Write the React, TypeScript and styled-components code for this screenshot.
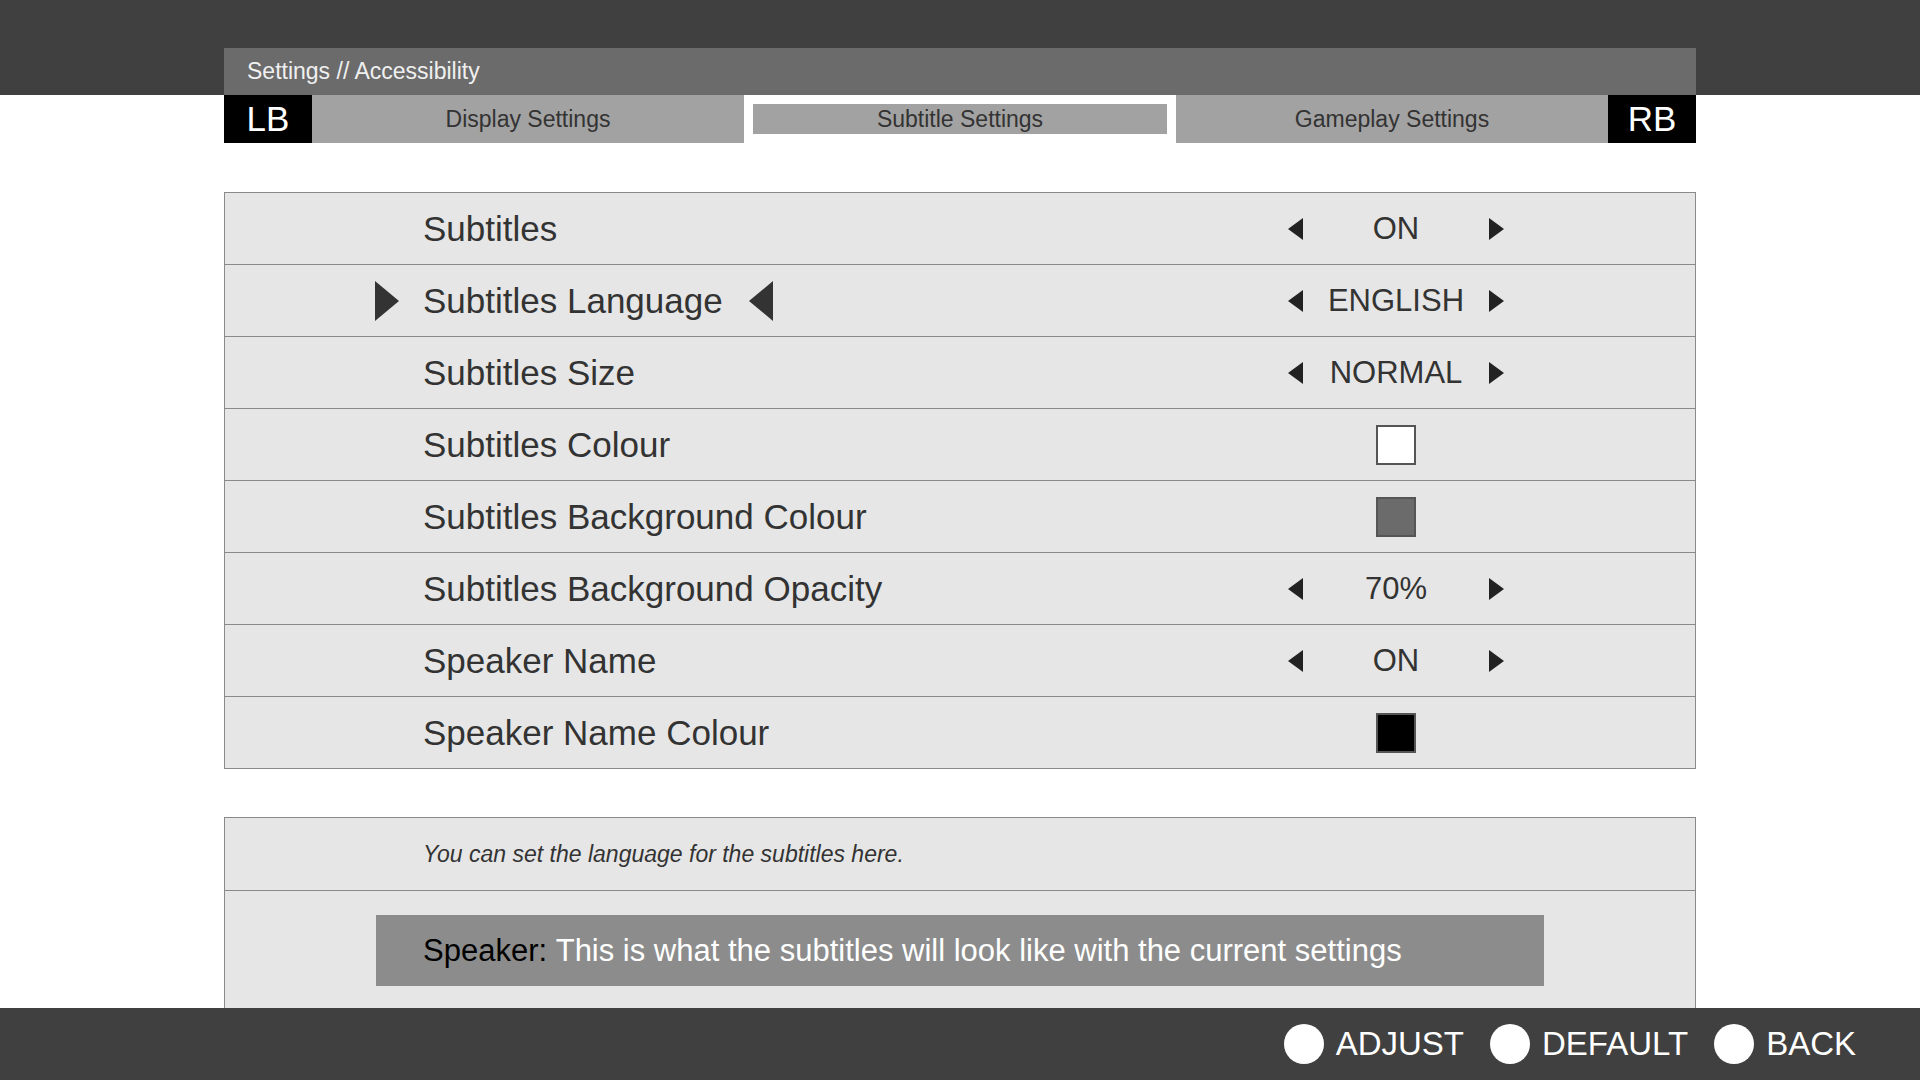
import React from "react";
import styled, { createGlobalStyle } from "styled-components";

const Global = createGlobalStyle`
  body { margin: 0; font-family: "Liberation Sans", Arial, sans-serif; background: #fff; }
`;

const Page = styled.div`
  position: relative;
  width: 1920px;
  height: 1080px;
  overflow: hidden;
  background: #fff;
`;

const TopBar = styled.div`
  height: 95px;
  background: #404040;
  display: flex;
  align-items: flex-end;
  padding: 0 224px;
`;

const Crumb = styled.div`
  flex: 1;
  height: 47px;
  background: #6b6b6b;
  color: #f0f0f0;
  font-size: 23px;
  display: flex;
  align-items: center;
  padding-left: 23px;
`;

const Content = styled.div`
  padding: 0 224px;
`;

const Tabs = styled.div`
  display: flex;
  height: 48px;
  gap: 9px;
`;

const Bumper = styled.div`
  width: 88px;
  background: #000;
  color: #fff;
  font-size: 35px;
  display: flex;
  align-items: center;
  justify-content: center;
`;

const Tab = styled.div<{ $active?: boolean }>`
  flex: 1;
  background: #a2a2a2;
  color: #333;
  font-size: 23px;
  display: flex;
  align-items: center;
  justify-content: center;
  box-shadow: ${(p) => (p.$active ? "inset 0 0 0 9px #fff" : "none")};
  margin: ${(p) => (p.$active ? "0" : "0 -9px")};
  &:first-of-type { margin-left: 0; }
`;

const List = styled.div`
  margin-top: 49px;
  border: 1px solid #8a8a8a;
  background: #e6e6e6;
`;

const Row = styled.div`
  height: 71px;
  display: flex;
  align-items: center;
  border-top: 1px solid #8a8a8a;
  &:first-child { border-top: none; }
  position: relative;
`;

const LabelCell = styled.div`
  width: 1040px;
  padding-left: 198px;
  box-sizing: border-box;
  display: flex;
  align-items: center;
  gap: 26px;
  font-size: 35px;
  color: #333;
`;

const BigArrow = styled.div<{ $dir: "l" | "r" }>`
  width: 0;
  height: 0;
  border-top: 20px solid transparent;
  border-bottom: 20px solid transparent;
  ${(p) => (p.$dir === "r" ? "border-left: 24px solid #333;" : "border-right: 24px solid #333;")}
`;

const Selector = styled.div`
  position: absolute;
  left: 150px;
`;

const ValueCell = styled.div`
  width: 216px;
  display: flex;
  align-items: center;
  justify-content: space-between;
  margin-left: 23px;
`;

const SmallArrow = styled.div<{ $dir: "l" | "r" }>`
  width: 0;
  height: 0;
  border-top: 11px solid transparent;
  border-bottom: 11px solid transparent;
  ${(p) => (p.$dir === "r" ? "border-left: 15px solid #222;" : "border-right: 15px solid #222;")}
`;

const Value = styled.div`
  font-size: 31px;
  color: #333;
  flex: 1;
  text-align: center;
`;

const Swatch = styled.div<{ $c: string }>`
  width: 36px;
  height: 36px;
  background: ${(p) => p.$c};
  border: 2px solid #555;
  margin: 0 auto;
`;

const InfoBox = styled.div`
  margin-top: 48px;
  border: 1px solid #8a8a8a;
  background: #e6e6e6;
`;

const Desc = styled.div`
  height: 72px;
  border-bottom: 1px solid #8a8a8a;
  display: flex;
  align-items: center;
  padding-left: 198px;
  font-style: italic;
  font-size: 23px;
  color: #333;
`;

const PreviewArea = styled.div`
  padding: 24px 151px 60px;
`;

const Preview = styled.div`
  height: 71px;
  background: #8c8c8c;
  color: #fff;
  font-size: 31px;
  display: flex;
  align-items: center;
  padding-left: 47px;
  b { color: #000; font-weight: normal; }
`;

const Footer = styled.div`
  position: absolute;
  left: 0;
  right: 0;
  bottom: 0;
  height: 72px;
  background: #404040;
  display: flex;
  justify-content: flex-end;
  align-items: center;
  gap: 26px;
  padding-right: 64px;
`;

const Prompt = styled.div`
  display: flex;
  align-items: center;
  gap: 12px;
  color: #fff;
  font-size: 33px;
`;

const Circle = styled.div`
  width: 40px;
  height: 40px;
  border-radius: 50%;
  background: #fff;
`;

type Item = { label: string; value?: string; swatch?: string; selected?: boolean };

const items: Item[] = [
  { label: "Subtitles", value: "ON" },
  { label: "Subtitles Language", value: "ENGLISH", selected: true },
  { label: "Subtitles Size", value: "NORMAL" },
  { label: "Subtitles Colour", swatch: "#fff" },
  { label: "Subtitles Background Colour", swatch: "#6b6b6b" },
  { label: "Subtitles Background Opacity", value: "70%" },
  { label: "Speaker Name", value: "ON" },
  { label: "Speaker Name Colour", swatch: "#000" },
];

export default function App() {
  return (
    <Page>
      <Global />
      <TopBar>
        <Crumb>Settings // Accessibility</Crumb>
      </TopBar>
      <Content>
        <Tabs>
          <Bumper>LB</Bumper>
          <Tab>Display Settings</Tab>
          <Tab $active>Subtitle Settings</Tab>
          <Tab>Gameplay Settings</Tab>
          <Bumper>RB</Bumper>
        </Tabs>
        <List>
          {items.map((it) => (
            <Row key={it.label}>
              {it.selected && (
                <Selector>
                  <BigArrow $dir="r" />
                </Selector>
              )}
              <LabelCell>
                {it.label}
                {it.selected && <BigArrow $dir="l" />}
              </LabelCell>
              <ValueCell>
                {it.value ? (
                  <>
                    <SmallArrow $dir="l" />
                    <Value>{it.value}</Value>
                    <SmallArrow $dir="r" />
                  </>
                ) : (
                  <Swatch $c={it.swatch!} />
                )}
              </ValueCell>
            </Row>
          ))}
        </List>
        <InfoBox>
          <Desc>You can set the language for the subtitles here.</Desc>
          <PreviewArea>
            <Preview>
              <b>Speaker:</b>&nbsp;This is what the subtitles will look like with the current settings
            </Preview>
          </PreviewArea>
        </InfoBox>
      </Content>
      <Footer>
        <Prompt><Circle />ADJUST</Prompt>
        <Prompt><Circle />DEFAULT</Prompt>
        <Prompt><Circle />BACK</Prompt>
      </Footer>
    </Page>
  );
}
